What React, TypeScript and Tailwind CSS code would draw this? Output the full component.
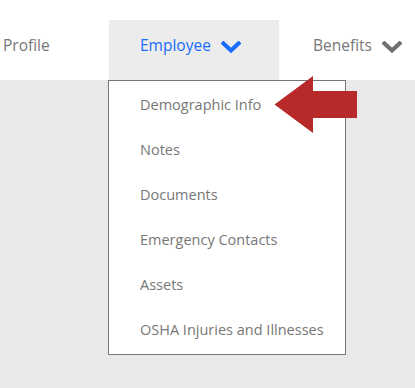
function Chevron({ color }: { color: string }) {
  return (
    <svg width="20" height="13" viewBox="0 0 20 13" className="ml-[10px] mt-[3px]">
      <polyline points="2.5,2.5 10,9.5 17.5,2.5" fill="none" stroke={color} strokeWidth="4.2" strokeLinecap="square" />
    </svg>
  );
}

const items = [
  'Demographic Info',
  'Notes',
  'Documents',
  'Emergency Contacts',
  'Assets',
  'OSHA Injuries and Illnesses',
];

export default function App() {
  return (
    <div className="relative w-[415px] h-[388px] overflow-hidden bg-[#e9e9e9] text-[14.5px] text-[#777]" style={{ fontFamily: '"Open Sans", sans-serif' }}>
      {/* Top nav */}
      <div className="flex h-[80px] bg-white text-[15.5px]">
        <div className="w-[109px] flex items-center pl-[3px] pt-[12px]">Profile</div>
        <div className="w-[170px] mt-[20px] h-[60px] bg-[#ececec] flex items-center pl-[31px] text-[#1a6cff]">
          <span className="-mt-[8px]">Employee</span>
          <span className="-mt-[8px]"><Chevron color="#1a6cff" /></span>
        </div>
        <div className="flex items-center pl-[34px] pt-[12px]">
          Benefits
          <Chevron color="#707070" />
        </div>
      </div>

      {/* Dropdown */}
      <div className="absolute left-[108px] top-[80px] w-[238px] h-[275px] bg-white border border-[#777] pt-[1px]">
        {items.map(item => (
          <div key={item} className="h-[45px] flex items-center pl-[31px]">{item}</div>
        ))}
      </div>

      {/* Callout arrow */}
      <svg className="absolute left-[274px] top-[76px]" width="84" height="58" viewBox="0 0 84 58">
        <polygon points="0.5,28.5 39,0 39,15 83,15 83,42 39,42 39,57" fill="#b82a2a" />
      </svg>
    </div>
  );
}
